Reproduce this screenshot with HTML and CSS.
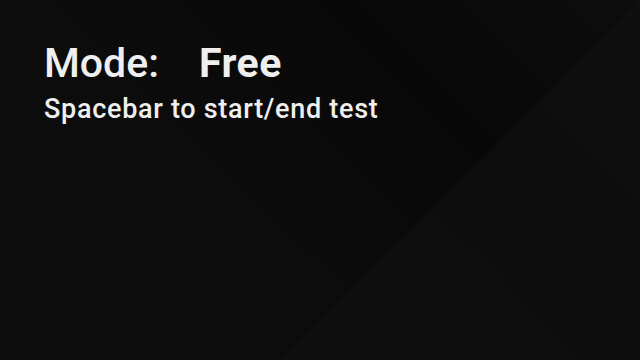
FILE: index.html
```html
<!doctype html>
<html>
<head>
<meta charset="utf-8">
<meta name="viewport" content="width=device-width,initial-scale=1.0"/>
<title>Mode</title>
<link rel="stylesheet" href="styles.css">
</head>
<body>
	<div class="screen">
		<div class="mode-line">
			<span class="mode-label">Mode:</span>
			<span class="mode-value">Free</span>
		</div>
		<p class="hint">Spacebar to start/end test</p>
	</div>
</body>
</html>
```

FILE: styles.css
```css
html, body{
	margin: 0;
	padding: 0;
	height: 100%;
}
body{
	font-family: Roboto, "Liberation Sans", sans-serif;
	background-color: #0a0a0a;
	background-image:
		linear-gradient(135deg, rgba(0,0,0,0) 64%, rgba(18,18,18,0.45) 64%),
		linear-gradient(45deg, #0c0c0c 40%, #080808 70%, #0d0d0d 100%);
	color: #efefef;
	overflow: hidden;
}
.screen{
	padding: 37px 0 0 44px;
}
.mode-line{
	display: flex;
	align-items: baseline;
	font-size: 41px;
	line-height: 52px;
	font-weight: 500;
}
.mode-label{
	width: 155px;
}
.mode-value{
	font-weight: bold;
	letter-spacing: 0.5px;
}
.hint{
	margin: 4px 0 0;
	font-size: 27px;
	line-height: 32px;
	font-weight: 500;
	letter-spacing: 0.7px;
}
```
